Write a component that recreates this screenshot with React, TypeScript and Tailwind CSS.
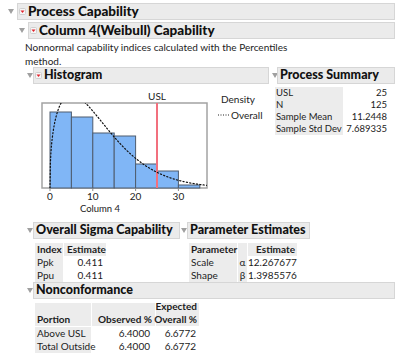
import React from "react";

const Tri = () => (
  <svg width="6" height="5" viewBox="0 0 6 5" className="shrink-0">
    <polygon points="0,0 6,0 3,5" fill="#a0a0a0" />
  </svg>
);

const Menu = () => (
  <svg width="7" height="7" viewBox="0 0 7 7" className="shrink-0">
    <rect x="0.5" y="0.5" width="6" height="6" rx="1" fill="#f6f6f6" stroke="#cfcfcf" />
    <polygon points="1.5,2.5 5.5,2.5 3.5,5" fill="#e3232c" />
  </svg>
);

function Header({ title, menu = false, big = false, className = "" }: { title: string; menu?: boolean; big?: boolean; className?: string }) {
  return (
    <div className={`h-[17px] flex items-center bg-[#ebebeb] border border-[#d6d6d6] ${className}`}>
      {menu && (
        <div className="pl-[1px] pr-[2px] flex items-center">
          <Menu />
        </div>
      )}
      <span className={`${menu ? "" : "pl-[2px]"} ${big ? "text-[13.5px]" : "text-[12.5px]"} font-black leading-none text-[#111] whitespace-nowrap`}>{title}</span>
    </div>
  );
}

function weibull(u: number) {
  const k = 1.3985576;
  const l = 12.267677;
  if (u <= 0) return 0;
  const z = u / l;
  return (k / l) * Math.pow(z, k - 1) * Math.exp(-Math.pow(z, k));
}

function Histogram() {
  const px = (u: number) => 12 + u * 4.28;
  const tops = [24, 29, 45, 48, 76, 83, 97];
  const pts: string[] = [];
  for (let u = 0; u <= 36.8; u += 0.1) {
    pts.push(`${px(u).toFixed(2)},${(100 - 1553 * weibull(u)).toFixed(2)}`);
  }
  return (
    <svg width="172" height="130" viewBox="0 0 172 130" className="shrink-0">
      <defs>
        <clipPath id="frameclip">
          <rect x="4" y="15" width="165" height="85" />
        </clipPath>
      </defs>
      <text x="119" y="11.5" textAnchor="middle" fontSize="10" fill="#222" fontFamily="Lato, sans-serif">USL</text>
      <rect x="4" y="15" width="165" height="85" fill="#fff" stroke="#a3a3a3" strokeWidth="1.5" />
      {tops.map((t, i) => (
        <rect key={i} x={px(i * 5)} y={t} width={5 * 4.28} height={100 - t} fill="#80b6f6" stroke="#4e5c6e" strokeWidth="1" />
      ))}
      <line x1="119" y1="15" x2="119" y2="100" stroke="#f2707e" strokeWidth="2" />
      <polyline points={pts.join(" ")} fill="none" stroke="#111" strokeWidth="1.2" strokeDasharray="1.2 2.2" strokeLinecap="round" clipPath="url(#frameclip)" />
      {[0, 10, 20, 30].map((v) => (
        <g key={v}>
          <line x1={px(v)} y1="100" x2={px(v)} y2="103" stroke="#888" strokeWidth="1" />
          <text x={px(v)} y="111.5" textAnchor="middle" fontSize="10" fill="#222" fontFamily="Lato, sans-serif">{v}</text>
        </g>
      ))}
      <text x="62" y="123.5" textAnchor="middle" fontSize="9.5" fill="#222" fontFamily="Lato, sans-serif">Column 4</text>
    </svg>
  );
}

export default function App() {
  const gray = "bg-[#ececec]";
  return (
    <div className="w-[400px] h-[353px] overflow-hidden bg-white text-[#1c1c1c] font-['Lato',sans-serif] text-[10px] leading-none pt-[3px]">
      {/* Row 1 */}
      <div className="flex items-center pl-[8px] pr-[5px]">
        <Tri />
        <Header title="Process Capability" menu big className="flex-1 ml-[3px]" />
      </div>
      {/* Row 2 */}
      <div className="flex items-center pl-[19px] pr-[5px] mt-[2px]">
        <Tri />
        <Header title="Column 4(Weibull) Capability" menu big className="flex-1 ml-[3px]" />
      </div>
      <div className="pl-[25px] w-[290px] leading-[14px] mt-[1px]">
        Nonnormal capability indices calculated with the Percentiles method.
      </div>
      {/* Histogram + Process Summary */}
      <div className="pl-[27px] pr-[5px] mt-[-1px]">
        <div className="flex">
          <div className="w-[242px] flex flex-col">
            <div className="flex items-center">
              <Tri />
              <Header title="Histogram" menu className="w-[236px]" />
            </div>
            <div className="flex pl-[11px] pt-[4px]">
              <Histogram />
              <div className="ml-[11px] pt-[3px] leading-[16px]">
                <div>Density</div>
                <div className="flex items-center ml-[-4px]">
                  <svg width="13" height="4" viewBox="0 0 13 4" className="mr-[1px]">
                    <line x1="1" y1="2" x2="12.5" y2="2" stroke="#222" strokeWidth="1.1" strokeDasharray="1 1.5" />
                  </svg>
                  <span>Overall</span>
                </div>
              </div>
            </div>
          </div>
          <div className="flex-1 flex flex-col ml-[3px]">
            <div className="flex items-center">
              <Tri />
              <Header title="Process Summary" className="flex-1 ml-[-1px]" />
            </div>
            <div className="ml-[3px] mt-[3px] w-[113px] leading-[12px] text-[9.5px]">
              {[
                ["USL", "25"],
                ["N", "125"],
                ["Sample Mean", "11.2448"],
                ["Sample Std Dev", "7.689335"],
              ].map(([a, b]) => (
                <div key={a} className="flex h-[12px]">
                  <div className={`w-[68px] ${gray} pl-[1px] whitespace-nowrap`}>{a}</div>
                  <div className="flex-1 text-right pr-[1px]">{b}</div>
                </div>
              ))}
            </div>
          </div>
        </div>

        {/* Overall Sigma + Parameter Estimates */}
        <div className="flex mt-[4px]">
          <div className="flex flex-col w-[154px]">
            <div className="flex items-center">
              <Tri />
              <Header title="Overall Sigma Capability" className="w-[147px]" />
            </div>
            <div className="ml-[8px] mt-[4px] leading-[13px]">
              <div className="flex h-[13px]">
                <div className={`w-[28px] ${gray} font-bold pl-[2px]`}>Index</div>
                <div className={`w-[42px] ml-[1px] ${gray} font-bold pl-[3px]`}>Estimate</div>
              </div>
              {[
                ["Ppk", "0.411"],
                ["Ppu", "0.411"],
              ].map(([a, b]) => (
                <div key={a} className="flex h-[13px]">
                  <div className={`w-[28px] ${gray} pl-[2px]`}>{a}</div>
                  <div className="w-[42px] ml-[1px] text-right pr-[3px]">{b}</div>
                </div>
              ))}
            </div>
          </div>
          <div className="flex flex-col">
            <div className="flex items-center">
              <Tri />
              <Header title="Parameter Estimates" className="w-[123px]" />
            </div>
            <div className="ml-[8px] mt-[4px] leading-[13px]">
              <div className="flex h-[13px]">
                <div className={`w-[48px] ${gray} font-bold pl-[2px] whitespace-nowrap`}>Parameter</div>
                <div className={`w-[9px] ml-[1px] ${gray}`}></div>
                <div className={`w-[49px] ml-[1px] ${gray} font-bold text-right pr-[2px]`}>Estimate</div>
              </div>
              {[
                ["Scale", "α", "12.267677"],
                ["Shape", "β", "1.3985576"],
              ].map(([a, s, b]) => (
                <div key={a} className="flex h-[13px]">
                  <div className={`w-[48px] ${gray} pl-[2px]`}>{a}</div>
                  <div className={`w-[9px] ml-[1px] ${gray} text-center`}>{s}</div>
                  <div className="w-[49px] ml-[1px] text-right pr-[2px]">{b}</div>
                </div>
              ))}
            </div>
          </div>
        </div>

        {/* Nonconformance */}
        <div className="flex items-center mt-[0px]">
          <Tri />
          <Header title="Nonconformance" className="flex-1" />
        </div>
        <div className="ml-[8px] mt-[4px]">
          <div className="flex h-[24px] leading-[13px] pb-[1px]">
            <div className={`w-[56px] ${gray} font-bold pl-[2px] flex items-end`}>Portion</div>
            <div className={`w-[63px] ml-[1px] ${gray} font-bold flex items-end justify-end pr-[3px] whitespace-nowrap`}>Observed %</div>
            <div className={`w-[43px] ml-[1px] ${gray} font-bold flex flex-col items-end justify-end pr-[2px] whitespace-nowrap`}>
              <div>Expected</div>
              <div>Overall %</div>
            </div>
          </div>
          {[
            ["Above USL", "6.4000", "6.6772"],
            ["Total Outside", "6.4000", "6.6772"],
          ].map(([a, b, c]) => (
            <div key={a} className="flex h-[13px] leading-[13px]">
              <div className={`w-[56px] ${gray} pl-[2px] whitespace-nowrap`}>{a}</div>
              <div className="w-[63px] ml-[1px] text-right pr-[5px]">{b}</div>
              <div className="w-[43px] ml-[1px] text-right pr-[3px]">{c}</div>
            </div>
          ))}
        </div>
      </div>
    </div>
  );
}
